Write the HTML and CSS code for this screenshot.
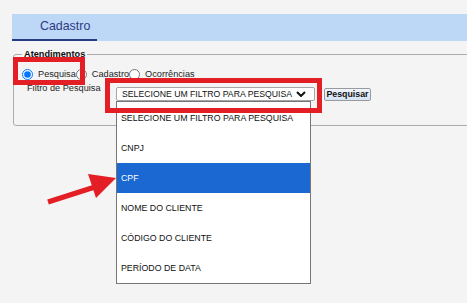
FILE: index.html
```html
<!DOCTYPE html>
<html lang="pt-BR">
<head>
<meta charset="utf-8">
<title>Cadastro</title>
<link rel="stylesheet" href="styles.css">
</head>
<body>
<div class="tabs">
  <div class="tab">Cadastro</div>
</div>
<fieldset class="box">
  <legend class="box-title">Atendimentos</legend>
  <div class="radio-row">
    <input class="radio" type="radio" name="tipo" checked><span class="radio-label">Pesquisa</span>
    <input class="radio" type="radio" name="tipo"><span class="radio-label">Cadastro</span>
    <input class="radio" type="radio" name="tipo"><span class="radio-label">Ocorrências</span>
  </div>
  <div class="filter-row">
    <span class="filter-label">Filtro de Pesquisa</span>
    <div class="select-wrap">
      <div class="select">
        <span class="select-text">SELECIONE UM FILTRO PARA PESQUISA</span>
        <svg class="chevron" width="10" height="6" viewBox="0 0 10 6"><path d="M1 1 L5 5 L9 1" fill="none" stroke="#111" stroke-width="2"/></svg>
      </div>
      <ul class="options">
        <li class="option">SELECIONE UM FILTRO PARA PESQUISA</li>
        <li class="option">CNPJ</li>
        <li class="option selected">CPF</li>
        <li class="option">NOME DO CLIENTE</li>
        <li class="option">CÓDIGO DO CLIENTE</li>
        <li class="option">PERÍODO DE DATA</li>
      </ul>
    </div>
    <button class="btn" type="button">Pesquisar</button>
  </div>
</fieldset>
<div class="mark mark-radio"></div>
<div class="mark mark-select"></div>
<svg class="arrow" width="467" height="303" viewBox="0 0 467 303">
  <line x1="48" y1="202" x2="98" y2="186" stroke="#e31e24" stroke-width="5"/>
  <polygon points="116,178 88,174 96,198" fill="#e31e24"/>
</svg>
</body>
</html>
```
FILE: styles.css
```css
html, body {
  margin: 0;
  padding: 0;
}
body {
  background: #f4f4f4;
  font-family: "Liberation Sans", Arial, sans-serif;
  color: #1e1e1e;
  overflow: hidden;
  width: 467px;
  height: 303px;
  position: relative;
}
.tabs {
  margin: 14px 0 0 12px;
  height: 27px;
  background: #bdd7f7;
  display: flex;
}
.tab {
  box-sizing: border-box;
  width: 85px;
  height: 27px;
  padding-left: 28px;
  border-bottom: 2px solid #263c85;
  color: #2d3a84;
  font-size: 12.4px;
  line-height: 25px;
}
.box {
  margin: 8px -20px 0 13px;
  padding: 0 0 24px 8px;
  border: 1px solid #ababab;
  border-radius: 3px;
  min-width: 0;
}
.box-title {
  padding: 0 2px;
  font-weight: bold;
  font-size: 9.2px;
  line-height: 11px;
  color: #111;
}
.radio-row {
  display: flex;
  align-items: center;
  height: 12px;
  margin-top: 8px;
  font-size: 9.2px;
}
.radio {
  width: 11px;
  height: 11px;
  margin: 0 5px 0 0;
}
.radio-label {
  line-height: 12px;
}
.filter-row {
  display: flex;
  align-items: flex-start;
  margin-top: 3px;
}
.filter-label {
  box-sizing: border-box;
  width: 94px;
  padding-left: 5px;
  font-size: 9.2px;
  line-height: 11px;
}
.select-wrap {
  position: relative;
  margin-top: 4px;
}
.select {
  box-sizing: border-box;
  width: 199px;
  height: 14px;
  background: #fff;
  border: 1px solid #a6a6a6;
  border-radius: 2px;
  padding: 0 8px 0 5px;
  display: flex;
  align-items: center;
  justify-content: space-between;
  font-size: 8.7px;
  color: #111;
}
.select-text {
  white-space: nowrap;
}
.chevron {
  flex: none;
}
.options {
  position: absolute;
  left: 0;
  top: 14px;
  z-index: 2;
  box-sizing: border-box;
  width: 195px;
  margin: 0;
  padding: 1px 0 0;
  list-style: none;
  background: #fff;
  border: 1px solid #767676;
  height: 183px;
}
.option {
  height: 30px;
  line-height: 30px;
  padding-left: 4px;
  font-size: 8.8px;
  color: #111;
  white-space: nowrap;
}
.option.selected {
  background: #1b68d3;
  color: #fff;
}
.btn {
  margin: 5px 0 0 9px;
  box-sizing: border-box;
  width: 47px;
  height: 13px;
  padding: 0;
  border: 1px solid #9a9a9a;
  border-radius: 2px;
  background: linear-gradient(#f0f5fd, #d5e3f6);
  font-family: "Liberation Sans", Arial, sans-serif;
  font-weight: bold;
  font-size: 8.8px;
  line-height: 11px;
  color: #111;
}
.mark {
  position: absolute;
  z-index: 3;
  box-sizing: border-box;
  border: 5px solid #e31e24;
}
.mark-radio {
  left: 13px;
  top: 57px;
  width: 72px;
  height: 28px;
}
.mark-select {
  left: 105px;
  top: 78px;
  width: 217px;
  height: 35px;
}
.arrow {
  position: absolute;
  left: 0;
  top: 0;
  z-index: 4;
  pointer-events: none;
}
```
